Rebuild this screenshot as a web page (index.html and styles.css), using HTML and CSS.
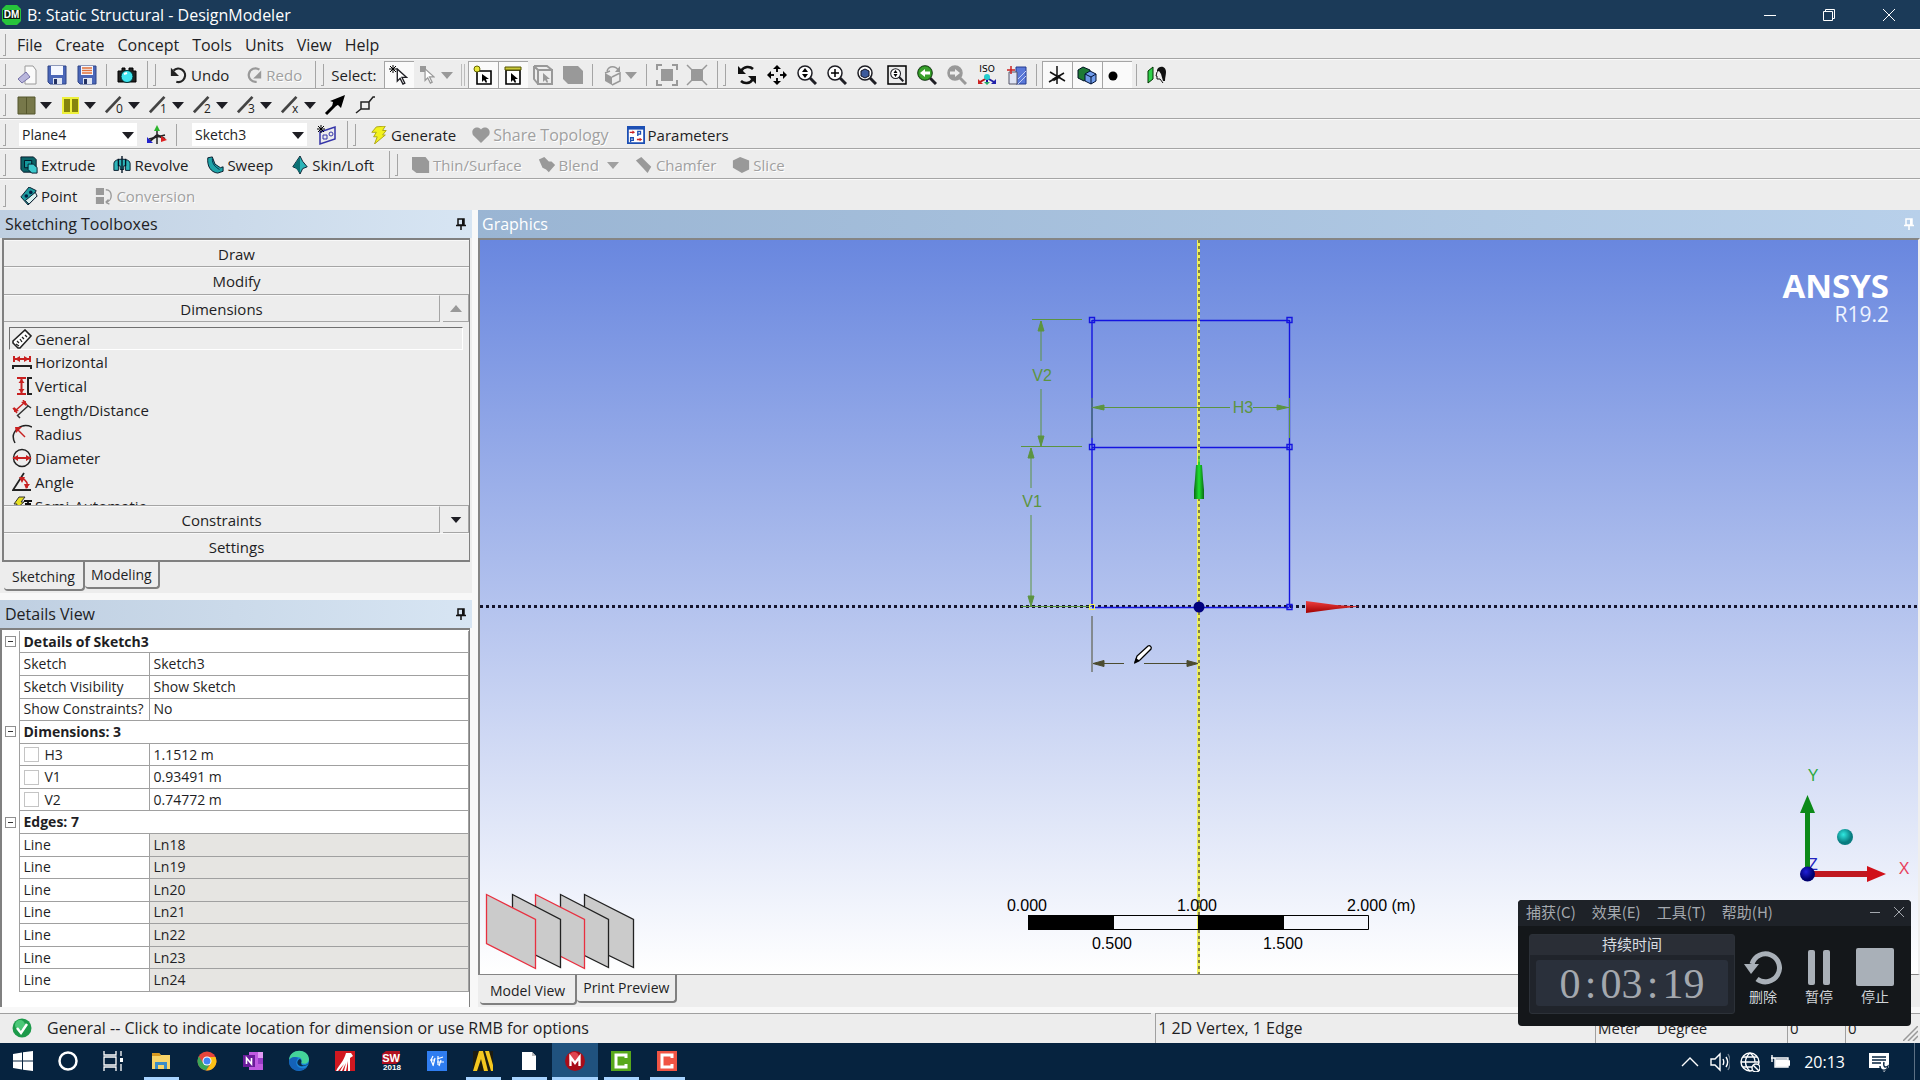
FILE: index.html
```html
<!DOCTYPE html>
<html lang="en">
<head>
<meta charset="utf-8">
<title>B: Static Structural - DesignModeler</title>
<link rel="stylesheet" href="styles.css">
</head>
<body>
<svg class="defs" aria-hidden="true">
  <symbol id="down" viewBox="0 0 12 8"><path d="M0 1h12L6 8z"/></symbol>
  <symbol id="cursor" viewBox="0 0 12 18"><path d="M1 1v13l3-3 3 6 2-1-3-6h5z" fill="#fff" stroke="currentColor" stroke-width="1.4"/></symbol>
  <symbol id="lens" viewBox="0 0 20 20"><circle cx="8" cy="8" r="7" fill="#fff" stroke="currentColor" stroke-width="1.5"/><path d="M13 13l6 6" stroke="currentColor" stroke-width="3"/></symbol>
  <symbol id="disk" viewBox="0 0 20 20"><path d="M1 1h18v18H3l-2-2z" fill="#4a66b8" stroke="#2f4486"/><path d="M4 1h12v9H4z" fill="#f4f7ff"/><path d="M6 13h9v6H6z" fill="#dfe5f2"/><path d="M7 14h3v5H7z" fill="#223060"/></symbol>
  <symbol id="pin" viewBox="0 0 10 12"><path d="M2 1h6v6H2zM0 7.500h10M5 8v4" fill="none" stroke="currentColor" stroke-width="1.500"/><path d="M6 1h2v6H6z" fill="currentColor"/></symbol>
  <symbol id="edge-line" viewBox="0 0 22 20"><path d="M1 18L17 1" stroke="#444" stroke-width="3"/></symbol>
</svg>

<header class="titlebar">
  <svg class="applogo" width="19" height="20" viewBox="0 0 19 20"><path d="M4 0h11l4 4v12l-4 4H4l-4-4V4z" fill="#27c43c"/><path d="M1 5h17v9H1z" fill="#0a1f0a"/><text x="9.500" y="13" text-anchor="middle" font-size="10" font-weight="bold" fill="#fff" font-family="Liberation Sans, sans-serif">DM</text></svg>
  <h1>B: Static Structural - DesignModeler</h1>
  <div class="winbuttons">
    <button aria-label="Minimize"><svg width="12" height="12" viewBox="0 0 12 12"><path d="M0 6.500h12"/></svg></button>
    <button aria-label="Restore"><svg width="12" height="12" viewBox="0 0 12 12"><path d="M.5 2.500h9v9h-9zM2.500 2.500v-2h9v9h-2"/></svg></button>
    <button aria-label="Close"><svg width="12" height="12" viewBox="0 0 12 12"><path d="M0 0l12 12M12 0L0 12"/></svg></button>
  </div>
</header>

<nav class="bar menu">
  <i class="grip"></i>
  <button>File</button><button>Create</button><button>Concept</button><button>Tools</button><button>Units</button><button>View</button><button>Help</button>
</nav>

<div class="bar">
  <div class="tb">
    <i class="grip"></i>
    <button class="ib" aria-label="New"><svg viewBox="0 0 20 20"><path d="M8 1h8l3 4v14H8z" fill="#fafafa" stroke="#999"/><path d="M1 14l8-7 4 5-8 6z" fill="#b9b6dc" stroke="#7672a8"/></svg></button>
    <button class="ib" aria-label="Save"><svg><use href="#disk"/></svg></button>
    <button class="ib" aria-label="Save project"><svg viewBox="0 0 20 20"><use href="#disk"/><path d="M5 3h10M5 5.500h10M5 8h10" stroke="#e0703a" stroke-width="1.500"/></svg></button>
    <i class="sep"></i>
    <button class="ib" aria-label="Capture image"><svg viewBox="0 0 20 20"><path d="M1 6h4V3h3v3h4V3h4v3h3v11H1z" fill="#222" stroke="#000"/><circle cx="10" cy="11.500" r="6" fill="#3fe4ee" stroke="#033"/><path d="M7 9l3-1" stroke="#fff" stroke-width="2"/></svg></button>
  </div>
  <div class="tb pad-s">
    <i class="grip"></i>
    <button class="cmd"><svg viewBox="0 0 20 20"><path d="M4 5a7.500 7.500 0 1 1 3 12.500" fill="none" stroke="#222" stroke-width="2.500"/><path d="M1 2v9h9z" fill="#222"/></svg>Undo</button>
    <button class="cmd" disabled><svg viewBox="0 0 20 20"><path d="M16 4a7.500 7.500 0 1 0-3 13.500" fill="none" stroke="#999" stroke-width="2.500"/><path d="M18 5v9h-9z" fill="#999"/></svg>Redo</button>
  </div>
  <div class="tb">
    <i class="grip"></i>
    <span class="lbl">Select:</span>
    <button class="ib on" aria-label="New selection"><svg viewBox="0 0 20 20"><path d="M4 0v8M0 4h8M1 1l6 6M7 1L1 7" stroke="#000"/><use href="#cursor" x="7" y="3" width="12" height="17"/></svg></button>
    <button class="ib drop dim" aria-label="Select mode" disabled><svg viewBox="0 0 20 20"><path d="M2 1h6v6H2z" fill="#999"/><use href="#cursor" x="6" y="3" width="11" height="16"/></svg><svg class="dn"><use href="#down"/></svg></button>
    <i class="sep dbl"></i>
    <button class="ib on" aria-label="Points"><svg viewBox="0 0 20 20"><path d="M4 6h14v13H4z" fill="#fff" stroke="#000" stroke-width="1.600"/><circle cx="4" cy="4" r="3" fill="#e8e83a" stroke="#660"/><path d="M9 9v8l2-2 2 3 1-1-1-3h3z"/></svg></button>
    <button class="ib on" aria-label="Edges"><svg viewBox="0 0 20 20"><path d="M3 5h14v14H3z" fill="#fff" stroke="#000" stroke-width="1.600"/><path d="M2 2h16v3H2z" fill="#c8c83a" stroke="#550"/><path d="M8 8v9l2-2 2 3 1-1-1-3h3z"/></svg></button>
    <button class="ib" aria-label="Faces" disabled><svg viewBox="0 0 20 20"><path d="M5 5h14v14H5zM1 1h13l5 4M1 1v13l4 5M1 1l4 4" fill="none" stroke="#999" stroke-width="2"/><path d="M10 8v9l2-2 2 3 1-1-1-3h3z" fill="#999"/></svg></button>
    <button class="ib" aria-label="Bodies" disabled><svg viewBox="0 0 20 20"><path d="M0 1h15l5 5v13H5l-5-5z" fill="#999"/></svg></button>
    <i class="sep"></i>
    <button class="ib drop dim" aria-label="Extend" disabled><svg viewBox="0 0 20 20"><path d="M3 8l7 4v8l-7-4z" fill="#999"/><path d="M10 12l8-4v8l-8 4M3 8l5-2M5 6c2-6 9-5 11-1" fill="none" stroke="#999" stroke-width="1.500"/><path d="M18 1v6h-5z" fill="#999"/></svg><svg class="dn"><use href="#down"/></svg></button>
    <i class="sep"></i>
    <button class="ib" aria-label="Expand" disabled><svg viewBox="0 0 20 20"><path d="M4 4h12v12H4z" fill="#999"/><path d="M0 5V0h5M15 0h5v5M20 15v5h-5M5 20H0v-5" fill="none" stroke="#999" stroke-width="2"/></svg></button>
    <button class="ib" aria-label="Shrink" disabled><svg viewBox="0 0 20 20"><path d="M4 4h12v12H4z" fill="#999"/><path d="M0 0l20 20M20 0L0 20" stroke="#999" stroke-width="1.500"/></svg></button>
  </div>
  <div class="tb last">
    <i class="grip"></i>
    <button class="ib" aria-label="Rotate"><svg viewBox="0 0 20 20"><path d="M4 6c3-5 9-5 12-2M16 14c-3 5-9 5-12 2" fill="none" stroke="#111" stroke-width="2.500"/><path d="M1 1v8h8zM19 19v-8h-8z" fill="#111"/></svg></button>
    <button class="ib" aria-label="Pan"><svg viewBox="0 0 20 20"><path d="M10 3v4M10 13v4M3 10h4M13 10h4" stroke="#111" stroke-width="2"/><path d="M10 0l4 4H6zM10 20l4-4H6zM0 10l4-4v8zM20 10l-4-4v8z"/></svg></button>
    <button class="ib" aria-label="Zoom"><svg viewBox="0 0 20 20"><use href="#lens"/><path d="M8 3l3 4H5zM8 13l3-4H5z"/></svg></button>
    <button class="ib" aria-label="Zoom in"><svg viewBox="0 0 20 20"><use href="#lens"/><path d="M8 4v8M4 8h8" stroke="#000" stroke-width="1.500"/></svg></button>
    <button class="ib" aria-label="Zoom fit"><svg viewBox="0 0 20 20"><use href="#lens"/><path d="M4 6l4-2 4 2v5l-4 2-4-2z" fill="#3c5a9c" stroke="#112"/></svg></button>
    <button class="ib" aria-label="Zoom box"><svg viewBox="0 0 20 20"><path d="M1 1h18v18H1z" fill="none" stroke="#000" stroke-width="1.500"/><use href="#lens" x="3" y="3" width="14" height="14"/><path d="M8.500 5l2 3h-4zM8.500 12l2-3h-4z"/></svg></button>
    <button class="ib" aria-label="Previous view"><svg viewBox="0 0 20 20"><use href="#lens"/><circle cx="8" cy="8" r="7" fill="#38a02c" stroke="#1c6a14"/><path d="M3 8l5-4v2.500h5v3H8V12z" fill="#fff"/></svg></button>
    <button class="ib dim" aria-label="Next view" disabled><svg viewBox="0 0 20 20"><use href="#lens"/><circle cx="8" cy="8" r="7" fill="#999"/><path d="M13 8L8 4v2.500H3v3h5V12z" fill="#eee"/></svg></button>
    <button class="ib" aria-label="Isometric view"><svg viewBox="0 0 20 20"><text x="10" y="7" text-anchor="middle" font-size="9" font-family="DejaVu Sans, sans-serif">ISO</text><path d="M10 13v6" stroke="#119" stroke-width="2"/><path d="M10 13l-7 4" stroke="#b11" stroke-width="2"/><path d="M10 13l7 4" stroke="#22a" stroke-width="2"/><path d="M1 14v5h5z" fill="#c22"/><path d="M19 14v5h-5z" fill="#22a"/><circle cx="10" cy="12" r="3" fill="#2cc"/><path d="M7 17h6l-3 3z" fill="#2a6"/></svg></button>
    <button class="ib" aria-label="Look at"><svg viewBox="0 0 20 20"><path d="M9 2h10v17H9z" fill="#5a78d8" stroke="#223a90"/><path d="M2 7h8v12H2z" fill="#dfe4f4" stroke="#556"/><path d="M11 14l8-8M11 19l8-8" stroke="#c4d0f4"/><path d="M4 1v8M0 5h8" stroke="#c22" stroke-width="1.500"/></svg></button>
    <i class="sep"></i>
    <button class="ib on" aria-label="Display plane"><svg viewBox="0 0 20 20"><path d="M10 1v18M2 17L17 8M3 7l15 9" fill="none" stroke="#111" stroke-width="1.500"/><path d="M6 15l7-4" stroke="#111" stroke-width="3"/></svg></button>
    <button class="ib on" aria-label="Display model"><svg viewBox="0 0 20 20"><path d="M1 5l5-3 7 3v8l-6 3-6-3z" fill="#1f7a36" stroke="#012"/><path d="M8 9l5-3 6 3v7l-5 3-6-3z" fill="#6f9bea" stroke="#013"/><path d="M8 9l6 3 5-3M14 12v7" fill="none" stroke="#013"/></svg></button>
    <button class="ib on" aria-label="Display points"><svg viewBox="0 0 20 20"><circle cx="6" cy="11" r="4.500"/></svg></button>
    <i class="sep"></i>
    <button class="ib" aria-label="Look at face"><svg viewBox="0 0 20 20"><path d="M1 6l5-4v12l-5 4z" fill="#2fd04a" stroke="#030"/><path d="M10 5c2-5 9-4 9 2 0 3-1 5-1 9h-2l-2-7-2-3-2 1z" fill="#111"/><path d="M10 7l-1 4h1v3h3l3 4" fill="none" stroke="#111"/></svg></button>
  </div>
</div>

<div class="bar lines">
  <i class="grip"></i>
  <button class="ib drop" aria-label="Face colour"><svg viewBox="0 0 20 20"><path d="M1 2h17v17H1z" fill="#77784a" stroke="#55562c"/><path d="M9.500 2v17" stroke="#55562c"/></svg><svg class="dn"><use href="#down"/></svg></button>
  <button class="ib drop" aria-label="Body colour"><svg viewBox="0 0 20 20"><path d="M1 2h17v17H1z" fill="#eef03a"/><path d="M3 4h6v13H3zM11 4h6v13h-6z" fill="#84840c"/></svg><svg class="dn"><use href="#down"/></svg></button>
  <button class="ib drop" aria-label="Edge joints 0"><svg viewBox="0 0 20 20"><use href="#edge-line"/><text x="11" y="18">0</text></svg><svg class="dn"><use href="#down"/></svg></button>
  <button class="ib drop" aria-label="Edge joints 1"><svg viewBox="0 0 20 20"><use href="#edge-line"/><text x="11" y="18">1</text></svg><svg class="dn"><use href="#down"/></svg></button>
  <button class="ib drop" aria-label="Edge joints 2"><svg viewBox="0 0 20 20"><use href="#edge-line"/><text x="11" y="18">2</text></svg><svg class="dn"><use href="#down"/></svg></button>
  <button class="ib drop" aria-label="Edge joints 3"><svg viewBox="0 0 20 20"><use href="#edge-line"/><text x="11" y="18">3</text></svg><svg class="dn"><use href="#down"/></svg></button>
  <button class="ib drop" aria-label="Edge joints x"><svg viewBox="0 0 20 20"><use href="#edge-line"/><text x="11" y="18">x</text></svg><svg class="dn"><use href="#down"/></svg></button>
  <button class="ib" aria-label="Edge direction"><svg viewBox="0 0 20 20"><path d="M1 19L13 7" stroke="#000" stroke-width="3"/><path d="M20 0l-4 13-3-3-6 2 1-5-3-1z"/></svg></button>
  <button class="ib" aria-label="Show vertices"><svg viewBox="0 0 20 20"><path d="M6 7h8v7H6zM6 14l-5 4M14 7l4-5h2" fill="none" stroke="#222" stroke-width="1.500"/></svg></button>
</div>

<div class="bar">
  <div class="tb planes">
    <i class="grip"></i>
    <label class="combo"><select aria-label="Active plane"><option>Plane4</option></select><svg class="dn"><use href="#down"/></svg></label>
    <button class="ib" aria-label="New plane"><svg viewBox="0 0 20 20"><path d="M10 19V5M2 14l16-4" stroke="#222" stroke-width="1.500"/><path d="M10 0l3 6H7z" fill="#2bb52b"/><path d="M10 10L2 17M10 10l8 4" stroke="#222" stroke-width="2"/><path d="M0 12v6h6z" fill="#22c"/><path d="M20 15l-6 2v-6z" fill="#d22"/></svg></button>
    <i class="sep"></i>
    <label class="combo narrow"><select aria-label="Active sketch"><option>Sketch3</option></select><svg class="dn"><use href="#down"/></svg></label>
    <button class="ib" aria-label="New sketch"><svg viewBox="0 0 20 20"><path d="M3 7l15-5v12L3 19z" fill="none" stroke="#3434a8" stroke-width="1.500"/><path d="M6 10h4v4H6z" fill="none" stroke="#3434a8"/><circle cx="14" cy="9" r="2" fill="none" stroke="#3434a8"/><path d="M4 0v8M0 4h8M1 1l6 6M7 1L1 7" stroke="#000"/></svg></button>
  </div>
  <div class="tb last pad-s">
    <i class="grip"></i>
    <button class="cmd"><svg viewBox="0 0 20 20"><path d="M7 1l10-1-3 5h4l-4 5h3L5 20l3-8H4l3-5H2z" fill="#f2f21c" stroke="#a8a010" stroke-width="1"/></svg>Generate</button>
    <button class="cmd wide" disabled><svg viewBox="0 0 20 20"><path d="M10 19L1 10C-2 3 6-1 10 4c4-5 12-1 9 6z" fill="#999"/></svg>Share Topology</button>
    <button class="cmd"><svg viewBox="0 0 20 20"><path d="M1 1h18v18H1z" fill="#fff" stroke="#1c4fb4" stroke-width="2"/><path d="M0 0h20v4H0z" fill="#1c4fb4"/><path d="M3 7h4M11 15h4" stroke="#c22" stroke-width="1.500"/><path d="M6 5l3 2-3 2zM14 13l3 2-3 2z" fill="#c22"/><path d="M12 11V6h3v3h-3M4 18v-5h3v3H4" fill="none" stroke="#1c4fb4" stroke-width="1.500"/></svg>Parameters</button>
  </div>
</div>

<div class="bar">
  <div class="tb">
    <i class="grip"></i>
    <button class="cmd"><svg viewBox="0 0 20 20"><path d="M1 1h14l3 3v14H4l-3-3z" fill="#0b6468" stroke="#012"/><path d="M5 5h8v8H5z" fill="#14989c" stroke="#012"/><path d="M9 9h6l4 4v6h-6l-4-4z" fill="#3cc8cc" stroke="#012"/></svg>Extrude</button>
    <button class="cmd"><svg viewBox="0 0 20 20"><path d="M1 16V8c0-6 18-6 18 0v8h-5v-5h-2v4H8v-4H6v5z" fill="#2cb4b8" stroke="#012"/><path d="M10 0v19M6 3v8M14 3v8" stroke="#012" stroke-width="1.500"/></svg>Revolve</button>
    <button class="cmd"><svg viewBox="0 0 20 20"><path d="M2 2l5-1 3 8 6 4 3-1v5l-6 2C5 18 1 11 2 2z" fill="#1fa4a8" stroke="#012"/><path d="M7 3c0 6 3 9 8 12" fill="none" stroke="#024"/></svg>Sweep</button>
    <button class="cmd"><svg viewBox="0 0 20 20"><path d="M10 0l3 6 5 6-5 2-3 6-3-6-5-2 4-6z" fill="#2cb4b8" stroke="#012"/><path d="M10 1v18l-7-8z" fill="#0b7074"/></svg>Skin/Loft</button>
  </div>
  <div class="tb last">
    <i class="grip"></i>
    <button class="cmd" disabled><svg viewBox="0 0 20 20"><path d="M0 1h15l4 5v13H5l-5-4z" fill="#999"/></svg>Thin/Surface</button>
    <button class="cmd" disabled><svg viewBox="0 0 20 20"><path d="M1 4l6-3 5 5h3l4 4-7 8-3-3-4-2z" fill="#999"/></svg>Blend<svg class="dn"><use href="#down"/></svg></button>
    <button class="cmd" disabled><svg viewBox="0 0 20 20"><path d="M1 5l6-4 11 11-4 7z" fill="#999"/></svg>Chamfer</button>
    <button class="cmd" disabled><svg viewBox="0 0 20 20"><path d="M1 5l8-4 10 4v10l-8 4-10-6z" fill="#999"/></svg>Slice</button>
  </div>
</div>

<div class="bar end">
  <i class="grip"></i>
  <button class="cmd"><svg viewBox="0 0 20 20"><path d="M10 0l8 4-2 4 3 2-10 10-8-9z" fill="#1f9ca0" stroke="#012"/><path d="M6 15l11-9 2 4-9 9z" fill="#d8f0f0" stroke="#012"/><circle cx="7" cy="10" r="2" fill="#024"/><circle cx="12" cy="6" r="2" fill="#024"/></svg>Point</button>
  <button class="cmd" disabled><svg viewBox="0 0 20 20"><path d="M1 1h9v8H1zM1 11h9v8H1z" fill="#999"/><path d="M12 3c8 0 8 13 0 14M12 17l3-3M12 17l4 2" fill="none" stroke="#999" stroke-width="1.500"/></svg>Conversion</button>
</div>

<main class="work">
  <div class="side">
    <section class="panel toolbox">
      <h2 class="phead">Sketching Toolboxes<svg class="pin"><use href="#pin"/></svg></h2>
      <div class="frame boxes">
        <button class="cat">Draw</button>
        <button class="cat">Modify</button>
        <div class="catrow"><button class="cat">Dimensions</button><button class="scroll off" aria-label="Scroll up"><svg viewBox="0 0 12 7"><path d="M0 7h12L6 0z"/></svg></button></div>
        <div class="tools">
          <button class="tool sel"><svg viewBox="0 0 20 20"><path d="M1 12L13 1l6 6L8 19H6l-5-5z" fill="#fff" stroke="#222" stroke-width="1.600"/><path d="M5 12l2 2M8 10l2 3M10 8l2 2M13 6l2 2M4 15l3 2" stroke="#222" stroke-width="1.300"/></svg>General</button>
          <button class="tool"><svg viewBox="0 0 20 20"><path d="M2 4v6M18 4v6M2 7h16" stroke="#c82020" stroke-width="2"/><path d="M3 7l5-3v6zM17 7l-5-3v6z" fill="#c82020"/><path d="M1 17v-3h18v3" fill="none" stroke="#222" stroke-width="2"/></svg>Horizontal</button>
          <button class="tool"><svg viewBox="0 0 20 20"><path d="M5 2h9M5 18h9M9.500 2v16" stroke="#c82020" stroke-width="2"/><path d="M9.500 3l3 4h-6zM9.500 17l3-4h-6z" fill="#c82020"/><path d="M20 2h-4v16h4" fill="none" stroke="#222" stroke-width="2"/></svg>Vertical</button>
          <button class="tool"><svg viewBox="0 0 20 20"><path d="M3 11L13 2M1 8l4 5M11 0l4 5" stroke="#c82020" stroke-width="1.500"/><path d="M2 12v-5l5 4zM14 1v5L9 2z" fill="#c82020"/><path d="M5 16L16 6M5 15l3 3M15 5l4 3" fill="none" stroke="#333" stroke-width="1.500"/></svg>Length/Distance</button>
          <button class="tool"><svg viewBox="0 0 20 20"><path d="M3 19C-3 8 9-2 20 3" fill="none" stroke="#222" stroke-width="1.500"/><path d="M5 5l8 8" stroke="#c82020" stroke-width="1.500"/><path d="M3 3h7l-6 6z" fill="#c82020"/></svg>Radius</button>
          <button class="tool"><svg viewBox="0 0 20 20"><circle cx="10" cy="10" r="8.500" fill="none" stroke="#222" stroke-width="1.500"/><path d="M1 10h18" stroke="#c82020" stroke-width="2"/><path d="M1 10l5-3v6zM19 10l-5-3v6z" fill="#c82020"/></svg>Diameter</button>
          <button class="tool"><svg viewBox="0 0 20 20"><path d="M12 1L1 18h18" fill="none" stroke="#222" stroke-width="1.800"/><path d="M10 6c4 2 6 6 5 10" fill="none" stroke="#c82020" stroke-width="1.500"/><path d="M7 5h6l-3 6zM12 12h6l-4 5z" fill="#c82020"/></svg>Angle</button>
          <button class="tool"><svg viewBox="0 0 20 20"><path d="M7 1h6L9 6h3l-9 8 2-6H2z" fill="#e8e020" stroke="#333"/><path d="M12 5h8M16 5v10M13 8h6" stroke="#111" stroke-width="1.800"/></svg>Semi-Automatic</button>
        </div>
        <div class="catrow"><button class="cat">Constraints</button><button class="scroll" aria-label="Scroll down"><svg class="dn"><use href="#down"/></svg></button></div>
        <button class="cat">Settings</button>
      </div>
      <div class="tabs"><button class="tab cur">Sketching</button><button class="tab">Modeling</button></div>
    </section>

    <section class="panel details">
      <h2 class="phead">Details View<svg class="pin"><use href="#pin"/></svg></h2>
      <div class="frame sheet">
        <table>
          <colgroup><col class="gut"><col class="key"><col></colgroup>
          <tbody>
            <tr><td><button class="fold" aria-label="Collapse"></button></td><th colspan="2">Details of Sketch3</th></tr>
            <tr><td></td><td>Sketch</td><td>Sketch3</td></tr>
            <tr><td></td><td>Sketch Visibility</td><td>Show Sketch</td></tr>
            <tr><td></td><td>Show Constraints?</td><td>No</td></tr>
            <tr><td><button class="fold" aria-label="Collapse"></button></td><th colspan="2">Dimensions: 3</th></tr>
            <tr><td></td><td><label><input type="checkbox">H3</label></td><td>1.1512 m</td></tr>
            <tr><td></td><td><label><input type="checkbox">V1</label></td><td>0.93491 m</td></tr>
            <tr><td></td><td><label><input type="checkbox">V2</label></td><td>0.74772 m</td></tr>
            <tr><td><button class="fold" aria-label="Collapse"></button></td><th colspan="2">Edges: 7</th></tr>
            <tr class="ro"><td></td><td>Line</td><td>Ln18</td></tr>
            <tr class="ro"><td></td><td>Line</td><td>Ln19</td></tr>
            <tr class="ro"><td></td><td>Line</td><td>Ln20</td></tr>
            <tr class="ro"><td></td><td>Line</td><td>Ln21</td></tr>
            <tr class="ro"><td></td><td>Line</td><td>Ln22</td></tr>
            <tr class="ro"><td></td><td>Line</td><td>Ln23</td></tr>
            <tr class="ro"><td></td><td>Line</td><td>Ln24</td></tr>
          </tbody>
        </table>
      </div>
    </section>
  </div>

  <section class="panel graphics">
    <h2 class="phead">Graphics<svg class="pin"><use href="#pin"/></svg></h2>
    <div class="view">
      <svg class="scene" viewBox="0 0 1438 734" preserveAspectRatio="xMidYMid slice">
        <defs>
          <linearGradient id="gg"><stop offset="0" stop-color="#0a6a14"/><stop offset=".5" stop-color="#1fe030"/><stop offset="1" stop-color="#0a6a14"/></linearGradient>
          <linearGradient id="gr" x2="0" y2="1"><stop offset="0" stop-color="#f04040"/><stop offset="1" stop-color="#a00000"/></linearGradient>
          <radialGradient id="gc" cx=".4" cy=".35"><stop offset="0" stop-color="#30e8e0"/><stop offset="1" stop-color="#087c80"/></radialGradient>
          <radialGradient id="gb" cx=".4" cy=".35"><stop offset="0" stop-color="#2020d8"/><stop offset="1" stop-color="#000070"/></radialGradient>
        </defs>
        <path class="axis" d="M0 366.500h1438"/>
        <g class="sketch">
          <path d="M612 80.500h197.500M612 207.500h197.500M612 367.500h197.500M612 80v287M809.500 80v287"/>
          <path class="node" d="M609.500 77.500h5v5h-5zM807 77.500h5v5h-5zM609.500 204.500h5v5h-5zM807 204.500h5v5h-5zM807 364.500h5v5h-5z"/>
        </g>
        <path d="M718.500 0v734" stroke="#f0f05a" stroke-width="3"/>
        <path class="axis thin" d="M719 0v734"/>
        <g class="dims">
          <path d="M552 79.500h50M561 81v40M561 149v57M541 206.500h61M551 208v40M551 275v91M541 366.500h71"/>
          <path d="M612 158v40M809.500 158v40M612 167.500h138M773 167.500h36"/>
          <path class="tips" d="M561 81l3 10h-6zM561 206l3-10h-6zM551 208l3 10h-6zM551 366l3-10h-6zM613 167.500l11-2.500v5zM808 167.500l-11-2.500v5z"/>
          <text x="562" y="141">V2</text><text x="552" y="267">V1</text><text x="763" y="173">H3</text>
        </g>
        <g class="newdim">
          <path d="M612 376v56M613 423.500h31M664 423.500h54"/>
          <path d="M613 423.500l11-3v6zM718 423.500l-11-3v6z" fill="#4c4c30"/>
          <path d="M609.500 364.500h5v5h-5z" fill="none" stroke="#f0f05a"/>
        </g>
        <path d="M655 422l2-6 11-10c2-1 4 1 3 3l-11 11z" fill="#fff" stroke="#000" stroke-width="1.300"/><path d="M654 424l2-6 4 3z"/>
        <path d="M719 212l1 13h2l1 14 1 11v9h-10v-9l1-11 1-14h2z" fill="url(#gg)"/>
        <path d="M826 361l30 4 24 1.500-24 2.500-30 4z" fill="url(#gr)"/>
        <circle cx="719" cy="367" r="5.500" fill="#00007c"/>

        <g class="planes-stack" fill="#cbcbcb" stroke="#222" stroke-width="1.300">
          <path d="M104.500 654.500l49 25v48l-49-24z"/>
          <path d="M80.500 654.500l48 25v48l-48-24z"/>
          <path d="M55.500 654.500l49 25v49l-49-25z" stroke="#e83040"/>
          <path d="M32.500 654.500l48 25v48l-48-24z"/>
          <path d="M6.500 654.500l49 25v49l-49-25z" stroke="#e83040"/>
        </g>

        <g class="ruler">
          <path d="M548.500 675.500h340v14h-340z" fill="none" stroke="#000"/>
          <path d="M548 675h86v15h-86zM718 675h86v15h-86z"/>
          <text x="547" y="671" text-anchor="middle">0.000</text>
          <text x="717" y="671" text-anchor="middle">1.000</text>
          <text x="867" y="671">2.000 (m)</text>
          <text x="632" y="709" text-anchor="middle">0.500</text>
          <text x="803" y="709" text-anchor="middle">1.500</text>
        </g>

        <g class="triad">
          <text x="1333" y="630" fill="#2424c0">Z</text>
          <path d="M1325 572h5v56h-5z" fill="#0c8a18"/><path d="M1327.500 555l7.500 18h-15z" fill="#0c8a18"/>
          <path d="M1333 631h56v6h-56z" fill="#c01820"/><path d="M1387 626l19 8-19 8z" fill="#d01018"/>
          <circle cx="1327.500" cy="634" r="7.500" fill="url(#gb)"/>
          <circle cx="1365" cy="597" r="8" fill="url(#gc)"/>
          <text x="1333" y="541" fill="#2aa83c">Y</text>
          <text x="1424" y="634" fill="#e8405c">X</text>
        </g>
        <text class="brand" x="1409" y="58">ANSYS</text>
        <text class="release" x="1409" y="82">R19.2</text>
      </svg>
    </div>
    <div class="tabs"><button class="tab cur">Model View</button><button class="tab">Print Preview</button></div>
  </section>
</main>

<footer class="status">
  <div class="cell msg"><svg width="20" height="20" viewBox="0 0 20 20"><circle cx="10" cy="10" r="9.500" fill="#1c9a4a"/><circle cx="8" cy="7" r="5" fill="#4cc878"/><path d="M5 10l4 5 6-9" fill="none" stroke="#fff" stroke-width="2.500"/></svg>General -- Click to indicate location for dimension or use RMB for options</div>
  <div class="cell pick">1 2D Vertex, 1 Edge</div>
  <div class="cell units"><span>Meter</span><span>Degree</span></div>
  <div class="cell num">0</div>
  <div class="cell num2">0<svg width="15" height="15" viewBox="0 0 15 15"><path d="M0 15L15 0M5 15L15 5M10 15l5-5" stroke="#999" stroke-width="1.500"/></svg></div>
</footer>

<nav class="taskbar">
  <button class="app sys" aria-label="Start"><svg viewBox="0 0 20 20"><path d="M0 3l9-1.500V9.500H0zM10 1.300L20 0v9.500H10zM0 10.500h9v8L0 17zM10 10.500h10V20l-10-1.300z" fill="#fff"/></svg></button>
  <button class="app sys" aria-label="Cortana"><svg viewBox="0 0 20 20"><circle cx="10" cy="10" r="8.500" fill="none" stroke="#fff" stroke-width="2.500"/></svg></button>
  <button class="app sys gap" aria-label="Task view"><svg viewBox="0 0 20 20"><path d="M1 0v4h12V0M1 20v-4h12v4M1 6h12v8H1zM18 0v5M18 13v7" fill="none" stroke="#fff" stroke-width="1.300"/><path d="M17 7h3v4h-3z" fill="#fff"/></svg></button>
  <button class="app run" aria-label="File Explorer"><svg viewBox="0 0 20 20"><path d="M1 2h7l2 2h9v14H1z" fill="#f8d468"/><path d="M1 2h7l2 3H1z" fill="#d89a20"/><path d="M4 18v-7h12v7h-3v-4H7v4z" fill="#3a8cc8"/></svg></button>
  <button class="app" aria-label="Chrome"><svg viewBox="0 0 20 20"><circle cx="10" cy="10" r="9.500" fill="#e8453c"/><path d="M1.800 5.200A9.500 9.500 0 0 0 9 19.500L13.500 12 10 14 6 12z" fill="#3aa757"/><path d="M9 19.500A9.500 9.500 0 0 0 18.500 6H10l4 4-1 4z" fill="#fbc116"/><circle cx="10" cy="10" r="4.500" fill="#fff"/><circle cx="10" cy="10" r="3.500" fill="#4285f4"/></svg></button>
  <button class="app" aria-label="OneNote"><svg viewBox="0 0 20 20"><path d="M6 1h14v18H6z" fill="#c05ae0"/><path d="M15 1h5v6h-5z" fill="#e29af4"/><path d="M15 7h5v6h-5z" fill="#9a3cc8"/><path d="M0 4h12v12H0z" fill="#6a1b9a"/><path d="M3.500 13V7l5 6V7" fill="none" stroke="#fff" stroke-width="1.600"/></svg></button>
  <button class="app" aria-label="Edge"><svg viewBox="0 0 20 20"><circle cx="10" cy="10" r="10" fill="#1a86d8"/><path d="M0 9C1-3 19-3 20 8c0 4-4 6-8 4 2-3 0-6-4-6S1 7 0 9z" fill="#44d49a"/><path d="M8 9c-3 5 3 11 10 7-6 7-18 4-18-6 1-4 6-5 9-3z" fill="#1462b8"/><path d="M11 8c3 2 0 4 2 6 2 1 5 0 7-2-1 2-5 4-9 3-4-2-3-6 0-7z" fill="#0a2a4a"/></svg></button>
  <button class="app" aria-label="CAD viewer"><svg viewBox="0 0 20 20"><path d="M0 0h20v20H0z" fill="#d01820"/><path d="M1 20C4 14 9 10 11 2l5 0 2 3-3 2v13h-2V10l-2 10H9l2-8-4 8H5l4-7-6 7z" fill="#fff"/></svg></button>
  <button class="app" aria-label="SolidWorks 2018"><svg viewBox="0 0 20 20"><path d="M1 3l4-3h14v10l-4 3H1z" fill="#b01020"/><text x="10" y="11" text-anchor="middle" font-size="11" font-weight="bold" fill="#fff">SW</text><text x="11" y="19" text-anchor="middle" font-size="8" font-weight="bold" fill="#fff">2018</text></svg></button>
  <button class="app" aria-label="Notes"><svg viewBox="0 0 20 20"><path d="M0 0h20v20H0z" fill="#2f7df0"/><path d="M3 9h4M6 5l-2 4 2 5M8 7l-2 8M10 8l6-2M11 5v9M10 11h7M14 9l-2 6" stroke="#fff" stroke-width="1.200" fill="none"/></svg></button>
  <button class="app run" aria-label="ANSYS Workbench"><svg viewBox="0 0 20 20"><path d="M0 0h20v20H0z" fill="#1c1c10"/><path d="M0 20L6 0h4l5 20h-4L8 8 4 20z" fill="#f4c820"/><path d="M12 0h4l4 14v6h-2z" fill="#f4c820"/></svg></button>
  <button class="app run" aria-label="Document"><svg viewBox="0 0 20 20"><path d="M3 1h10l4 4v14H3z" fill="#fff"/><path d="M13 1v4h4z" fill="#bbb"/></svg></button>
  <button class="app run cur" aria-label="DesignModeler"><svg viewBox="0 0 20 20"><circle cx="10" cy="10" r="10" fill="#a80c18"/><circle cx="9" cy="6" r="5" fill="#e04450"/><path d="M5.500 15V6L10 12l4.500-6v9" fill="none" stroke="#fff" stroke-width="2.300"/></svg></button>
  <button class="app run" aria-label="Camtasia"><svg viewBox="0 0 20 20"><path d="M0 0h20v20H0z" fill="#58a81c"/><path d="M15 7V4H5v12h10v-3" fill="none" stroke="#fff" stroke-width="3"/></svg></button>
  <button class="app run" aria-label="Camtasia Recorder"><svg viewBox="0 0 20 20"><path d="M0 0h20v20H0z" fill="#f05444"/><path d="M15 7V4H5v12h10v-3" fill="none" stroke="#fff" stroke-width="3"/></svg></button>
  <div class="tray">
    <button aria-label="Hidden icons"><svg viewBox="0 0 20 20"><path d="M2 14l8-8 8 8"/></svg></button>
    <button aria-label="Volume"><svg viewBox="0 0 20 20"><path d="M1 7h4l5-5v16l-5-5H1zM13 7c1 2 1 4 0 6M16 5c2 3 2 7 0 10"/><path d="M18 2c3 5 3 11 0 16" opacity=".4"/></svg></button>
    <button aria-label="Network"><svg viewBox="0 0 20 20"><circle cx="10" cy="10" r="9"/><path d="M1 10h18M3 5h14M3 15h9M10 1c-6 5-6 13 0 18M10 1c5 4 5 7 5 9"/><circle cx="16" cy="16" r="4" fill="#06233f"/><path d="M13 13l6 6"/></svg></button>
    <button aria-label="Battery"><svg viewBox="0 0 20 20"><path d="M5 6h13v9H5zM2 3v7M1 6h4"/><path d="M6 8h11v6H6zM18 9h2v4h-2z" fill="#fff"/></svg></button>
    <time>20:13</time>
    <button aria-label="Notifications"><svg viewBox="0 0 20 20"><path d="M0 1h20v14l-5 5-3-4H0z" fill="#fff" stroke="none"/><path d="M3 5h14M3 8h14M3 11h9" stroke="#06233f"/><path d="M15 10c-1 5 1 6 4 4-1 6-8 5-8 0" fill="#fff" stroke="#06233f"/></svg></button>
    <i class="peek"></i>
  </div>
</nav>

<aside class="recorder" lang="zh-CN">
  <div class="rmenu">
    <button>捕获(C)</button><button>效果(E)</button><button>工具(T)</button><button>帮助(H)</button>
    <button class="rmin" aria-label="最小化"><svg width="10" height="10" viewBox="0 0 10 10"><path d="M0 5.500h10"/></svg></button>
    <button aria-label="关闭"><svg width="10" height="10" viewBox="0 0 10 10"><path d="M0 0l10 10M10 0L0 10"/></svg></button>
  </div>
  <div class="rbody">
    <div class="clock"><div class="chead">持续时间</div><div class="digits">0<b>:</b>03<b>:</b>19</div></div>
    <button class="rbtn"><svg width="38" height="38" viewBox="0 0 38 38"><path d="M13 31a14 14 0 1 0-5-15" fill="none" stroke="#a9b0b8" stroke-width="5"/><path d="M0 16h15l-8 10z" fill="#a9b0b8"/></svg>删除</button>
    <button class="rbtn"><svg width="38" height="38" viewBox="0 0 38 38"><rect x="8" y="2" width="7" height="35" rx="2" fill="#a9b0b8"/><rect x="23" y="2" width="7" height="35" rx="2" fill="#a9b0b8"/></svg>暂停</button>
    <button class="rbtn"><svg width="38" height="38" viewBox="0 0 38 38"><rect width="38" height="38" rx="2" fill="#a9b0b8"/></svg>停止</button>
  </div>
</aside>
</body>
</html>
```
FILE: styles.css
```css
* { box-sizing: border-box; }
body {
  margin: 0;
  height: 100vh;
  display: flex;
  flex-direction: column;
  overflow: hidden;
  background: #f8f8f8;
  color: #1e1e24;
  font: 15px/20px "Open Sans", "Noto Sans CJK SC", sans-serif;
}
button {
  margin: 0;
  padding: 0;
  border: 0;
  background: none;
  font: inherit;
  color: inherit;
  text-align: left;
}
.defs { position: absolute; width: 0; height: 0; }
svg { display: block; flex: none; }

/* title bar */
.titlebar {
  flex: none;
  height: 29px;
  display: flex;
  align-items: center;
  padding-left: 2px;
  background: #1b3a58;
  color: #fff;
}
.titlebar h1 { margin: 0 0 0 6px; font-size: 16px; font-weight: 400; flex: 1; }
.winbuttons { display: flex; }
.winbuttons button { width: 59px; height: 29px; display: grid; place-items: center; }
.winbuttons button:last-child { width: 62px; }
.winbuttons path { fill: none; stroke: #fff; }

/* toolbars */
.bar {
  flex: none;
  height: 30px;
  display: flex;
  align-items: center;
  padding-top: 1px;
  background: #ededed;
  border-bottom: 1px solid #a5a5a5;
  border-top: 1px solid #fafafa;
}
.bar.end { height: 31px; border-bottom: 0; }
.grip {
  flex: none;
  width: 3px;
  height: 22px;
  margin: 0 6px 0 3px;
  border-right: 1px solid #a5a5a5;
  border-bottom: 1px solid #a5a5a5;
}
.menu { font-size: 16px; }
.menu button { margin: 0 0 0 5px; padding-right: 8px; }
.tb {
  display: flex;
  align-items: center;
  height: 27px;
  padding-right: 5px;
  border-right: 1px solid #a5a5a5;
}
.tb + .tb { margin-left: 2px; }
.tb.last { border: 0; }
.ib {
  width: 30px;
  height: 27px;
  display: flex;
  align-items: center;
  justify-content: center;
  flex: none;
}
.ib > svg { width: 20px; height: 20px; overflow: visible; }
.ib.on {
  background: #fafafa;
  border-left: 1px solid #a5a5a5;
  border-top: 1px solid #a5a5a5;
}
.ib.drop { width: 44px; gap: 3px; }
.dn, .ib > .dn { width: 12px; height: 8px; fill: currentColor; }
.dim { color: #999; }
.sep { flex: none; width: 1px; height: 22px; margin: 0 5px 0 4px; background: #a5a5a5; }
.sep.dbl { width: 4px; background: none; border: solid #bbb; border-width: 0 1px; margin: 0 3px; }
.lbl { padding-right: 7px; margin-left: 1px; }
.cmd {
  display: flex;
  align-items: center;
  gap: 3px;
  padding: 0 10px 0 8px;
  white-space: nowrap;
}
.cmd > svg { width: 18px; height: 18px; }
.cmd > .dn { width: 12px; height: 8px; margin-left: 5px; }
.cmd:disabled { color: #a0a0a0; text-shadow: 1px 1px 0 #fff; }
.pad-s .cmd, .last .cmd { padding: 0 8px; }
.pad-s .cmd.wide { font-size: 16px; padding-right: 10px; }
.lines text { font-size: 12px; fill: #222; }
.combo {
  display: flex;
  align-items: center;
  width: 118px;
  height: 23px;
  margin-left: 7px;
  padding: 0 3px;
  background: #fff;
}
.combo.narrow { width: 115px; margin-left: 10px; }
.combo select {
  flex: 1;
  min-width: 0;
  appearance: none;
  border: 0;
  padding: 0;
  background: none;
  font: 14px/20px "Open Sans", sans-serif;
  color: inherit;
}
.planes .ib { margin-left: 5px; }

/* workspace */
.work {
  flex: 1;
  min-height: 0;
  display: grid;
  grid-template-columns: 472px minmax(0, 1fr);
  grid-template-rows: minmax(0, 1fr);
  column-gap: 6px;
  padding-bottom: 6px;
}
.side { display: flex; flex-direction: column; gap: 7px; min-height: 0; }
.panel { display: flex; flex-direction: column; min-height: 0; }
.toolbox { flex: 383 1 0; background: #ededed; }
.details { flex: 407 1 0; }
.phead {
  flex: none;
  display: flex;
  align-items: center;
  justify-content: space-between;
  height: 28px;
  margin: 0;
  padding: 0 6px 0 5px;
  font-size: 16px;
  font-weight: 400;
  background: linear-gradient(90deg, #bfcfe1, #d7e5f3);
}
.pin { width: 10px; height: 12px; color: #111; }
.frame { flex: 1; min-height: 0; border: 2px solid #808080; border-right-width: 1px; margin-right: 2px; }
.boxes { display: flex; flex-direction: column; overflow: hidden; margin-left: 2px; }
.cat {
  flex: none;
  height: 27px;
  text-align: center;
  border-bottom: 1px solid #a5a5a5;
  border-top: 1px solid #f8f8f8;
}
.boxes > .cat:nth-child(2) { height: 28px; }
.catrow { flex: none; display: flex; gap: 3px; }
.catrow .cat { flex: 1; border-right: 1px solid #a5a5a5; }
.tools + .catrow { border-top: 1px solid #a5a5a5; }
.scroll { width: 26px; display: grid; place-items: center; border: solid #a5a5a5; border-width: 0 1px 1px 0; }
.scroll svg { width: 12px; height: 7px; }
.scroll.off { fill: #999; }
.tools { flex: 1; min-height: 0; overflow: hidden; padding: 5px 6px 0 5px; }
.tool { display: flex; align-items: center; gap: 3px; width: 100%; height: 24px; padding-left: 3px; }
.tool svg { width: 20px; height: 20px; }
.tool.sel { height: 23px; border: 1px solid; border-color: #707070 #fff #fff #707070; padding-left: 2px; }
.boxes > .cat:last-child { border-bottom: 0; }
.tabs { flex: none; display: flex; height: 31px; padding-left: 4px; background: #ededed; font-size: 14px; }
.tab {
  height: 27px;
  padding: 0 6px;
  text-align: center;
  border: solid #808080;
  border-width: 0 2px 2px 0;
  border-radius: 0 0 4px 4px;
}
.tab.cur { height: 29px; padding: 3px 8px 0; }

/* details sheet */
.sheet { background: #fff; border-bottom: 0; overflow: hidden; padding-top: 1px; }
.sheet table {
  width: 100%;
  height: 361px;
  table-layout: fixed;
  border-collapse: collapse;
  font-size: 14px;
  line-height: 18px;
}
.gut { width: 17px; }
.key { width: 130px; }
.sheet td, .sheet th {
  padding: 0 4px;
  border: 1px solid #a0a0a0;
  text-align: left;
  white-space: nowrap;
}
.sheet tr > td:first-child { border-top: 0; border-bottom: 0; border-left: 0; padding: 0 3px; }
.sheet tr:first-child > * { border-top: 0; }
.ro td:last-child { background: #e6e5e2; }
.sheet label { display: flex; align-items: center; gap: 6px; }
.sheet input { appearance: none; margin: 0; width: 15px; height: 15px; border: 1px solid #c4c4c4; background: #fff; }
.fold {
  display: block;
  width: 11px;
  height: 11px;
  border: 1px solid #909090;
  background: linear-gradient(#333, #333) center / 5px 1px no-repeat #fff;
}

/* graphics */
.graphics .phead { background: linear-gradient(90deg, #9ab5d3, #b8d0ea); color: #fff; padding: 0 6px 0 4px; }
.graphics .pin { color: #fff; }
.view {
  flex: 1;
  min-height: 0;
  border: 2px solid #858585;
  border-bottom-width: 1px;
  border-right-color: #eee;
  background: linear-gradient(#6987df, #b4c3ee 50%, #fff);
}
.scene { width: 100%; height: 100%; }
.graphics .tabs { height: 32px; padding-left: 2px; }
.graphics .tab { height: 28px; }
.graphics .tab.cur { height: 30px; padding: 4px 10px 0; }
.axis { stroke: #14142c; stroke-width: 3; stroke-dasharray: 3 3; fill: none; }
.axis.thin { stroke-width: 1; }
.sketch { fill: none; stroke: #1414e0; stroke-width: 1.4; }
.dims { fill: none; stroke: #5c9440; stroke-width: 1; }
.dims .tips { fill: #5c9440; }
.dims text { fill: #5c9440; stroke: none; font: 16px "Liberation Sans", sans-serif; text-anchor: middle; }
.newdim { stroke: #4c4c30; fill: none; }
.ruler text { font: 16px "Liberation Sans", sans-serif; }
.triad text { font: 16px "Liberation Sans", sans-serif; text-anchor: middle; }
.brand { font: bold 33px "Open Sans", sans-serif; fill: #fff; text-anchor: end; }
.release { font: 21px "Open Sans", sans-serif; fill: #eef4ff; text-anchor: end; }

/* status bar */
.status { flex: none; display: flex; height: 30px; font-size: 16px; background: #ededed; }
.cell {
  display: flex;
  align-items: center;
  border-left: 1px solid #a0a0a0;
  border-top: 1px solid #a0a0a0;
  padding: 0 0 2px 2px;
  white-space: nowrap;
}
.msg { flex: 1150 1 0; gap: 15px; padding-left: 12px; border-left: 0; margin-right: 4px; }
.pick { flex: 441 1 0; }
.units { width: 192px; gap: 17px; font-size: 15px; }
.num { width: 58px; font-size: 15px; }
.num2 { width: 75px; font-size: 15px; justify-content: space-between; padding-right: 2px; }
.num2 svg { align-self: flex-end; }

/* taskbar */
.taskbar { flex: none; display: flex; height: 37px; background: #06233f; color: #fff; }
.app { width: 46px; display: grid; place-items: center; padding-bottom: 1px; }
.app > svg { width: 20px; height: 20px; overflow: visible; }
.app text { font-family: "Liberation Sans", sans-serif; }
.sys { width: 45px; }
.gap { margin-right: 3px; }
.run { background: linear-gradient(#a8d4ff, #a8d4ff) center bottom / 35px 3px no-repeat; }
.run.cur { background: linear-gradient(#a8d4ff, #a8d4ff) center bottom / 46px 3px no-repeat #20527e; }
.tray { margin-left: auto; display: flex; align-items: center; font-size: 16px; }
.tray button { width: 20px; margin-right: 10px; }
.tray button svg { width: 20px; height: 20px; fill: none; stroke: #fff; stroke-width: 1.4; }
.tray time { margin: 0 24px 0 4px; }
.tray time + button { margin-right: 25px; }
.peek { width: 1px; height: 37px; margin-right: 5px; background: #5c7084; }

/* floating recorder */
.recorder {
  position: absolute;
  right: 9px;
  bottom: 54px;
  width: 393px;
  height: 126px;
  border-radius: 4px;
  overflow: hidden;
  background: #14171a;
  color: #a4a8ae;
  font-family: "Noto Sans CJK SC", sans-serif;
}
.rmenu { display: flex; align-items: center; height: 26px; padding: 0 7px 2px 8px; gap: 16px; background: #1e2228; font-size: 15px; }
.rmenu svg { fill: none; stroke: #a4a8ae; }
.rmin { margin-left: auto; }
.rmenu button:last-child { margin: 0 0 0 -2px; }
.rbody { display: flex; gap: 18px; padding: 8px 17px 0 11px; }
.clock { width: 206px; height: 80px; background: #20242b; border: 1px solid #2c3138; border-radius: 3px; margin-right: auto; }
.chead { height: 20px; background: #2a2e36; color: #d8dce0; text-align: center; line-height: 18px; }
.clock { flex: none; }
.rbtn:nth-child(2) { margin-left: -18px; }
.digits {
  height: 46px;
  margin: 5px 6px;
  border-radius: 3px;
  background: #2a303b;
  text-align: center;
  font: 42px/48px "Liberation Serif", serif;
}
.digits b { display: inline-block; width: 20px; font-weight: 400; }
.rbtn {
  flex: none;
  display: flex;
  flex-direction: column;
  align-items: center;
  width: 38px;
  margin-top: 14px;
  font-size: 14px;
  line-height: 20px;
  color: #d0d4d8;
  white-space: nowrap;
}
```
